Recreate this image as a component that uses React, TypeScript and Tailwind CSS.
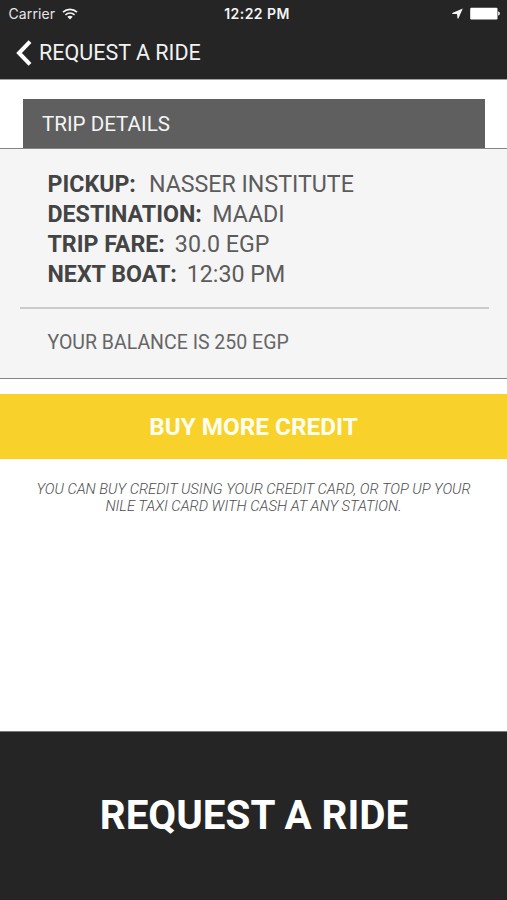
import { clsx } from "clsx"

interface TripDetail {
  label: string
  value: string
  gap: string
}

const tripDetails: TripDetail[] = [
  { label: "PICKUP:", value: "NASSER INSTITUTE", gap: "gap-[13px]" },
  { label: "DESTINATION:", value: "MAADI", gap: "gap-[10.5px]" },
  { label: "TRIP FARE:", value: "30.0 EGP", gap: "gap-[10px]" },
  { label: "NEXT BOAT:", value: "12:30 PM", gap: "gap-[10px]" },
]

function WifiIcon() {
  return (
    <svg className="ml-[7px] h-[12px] w-[16px]" viewBox="0 0 16 12" fill="none" stroke="#f2f2f2">
      <path d="M1 4.2C5 0.3 11 0.3 15 4.2" strokeWidth="1.7" />
      <path d="M3.4 6.8C6 4.4 10 4.4 12.6 6.8" strokeWidth="1.6" />
      <path d="M5.3 8.8C6.9 7.4 9.1 7.4 10.7 8.8L8 11.6Z" fill="#f2f2f2" stroke="none" />
    </svg>
  )
}

function StatusBar() {
  return (
    <div className="grid h-[27px] grid-cols-3 items-center font-[Inter,sans-serif] text-[14px] text-[#e6e6e6]">
      <div className="flex items-center pl-[8.5px]">
        <span className="tracking-[0.1px]">Carrier</span>
        <WifiIcon />
      </div>
      <div className="pl-[7px] text-center text-[14px] font-semibold tracking-[0.45px] text-[#f5f5f5]">12:22 PM</div>
      <div className="flex items-center justify-end pr-[7px]">
        <svg className="h-[11px] w-[11px]" viewBox="0 0 11 11" fill="#f5f5f5">
          <path d="M10.8 0.4L0.2 5L0.4 6L5 6.1L5.5 10.6L6.4 10.6Z" />
        </svg>
        <svg className="ml-[7px] h-[13px] w-[30px]" viewBox="0 0 30 13" fill="#ffffff">
          <rect x="0.2" y="0.8" width="27.3" height="11.6" rx="1.2" />
          <path d="M28.2 4.6C30.4 5.2 30.4 8 28.2 8.6Z" />
        </svg>
      </div>
    </div>
  )
}

function Header() {
  return (
    <header className="h-20 border-b border-[#a0a0a0] bg-[#252525]">
      <StatusBar />
      <div className="flex h-[52px] items-center pl-4">
        <svg className="h-[26px] w-4" viewBox="0 0 16 26" fill="none" stroke="#ffffff" strokeWidth="4">
          <path d="M14 1.6L3 13L14 24.4" />
        </svg>
        <h1 className="ml-[7px] text-[21.5px] leading-none text-[#f2f2f2]">REQUEST A RIDE</h1>
      </div>
    </header>
  )
}

export default function App() {
  return (
    <div className="flex h-[900px] w-[507px] flex-col overflow-hidden bg-white font-[Roboto,sans-serif]">
      <Header />

      <section className="mt-[19px]">
        <h2 className="mr-[22px] ml-[23px] flex h-[49px] items-center bg-[#5f5f5f] pt-px pl-[19px] text-[20.6px] leading-none text-[#f5f5f5]">
          TRIP DETAILS
        </h2>
        <div className="h-[231px] border-y border-[#858585] bg-[#f5f5f5] pt-5 pr-[18px] pl-5">
          <dl className="pl-[27.5px] text-[23.2px] leading-[30px]">
            {tripDetails.map((detail) => (
              <div key={detail.label} className={clsx("flex", detail.gap)}>
                <dt className="font-bold text-[#444444]">{detail.label}</dt>
                <dd className="text-[#5c5c5c]">{detail.value}</dd>
              </div>
            ))}
          </dl>
          <hr className="mt-[18px] border-t-2 border-[#cbcbcb]" />
          <p className="pt-[24px] pl-[27.5px] text-[19.5px] leading-5 text-[#666666]">YOUR BALANCE IS 250 EGP</p>
        </div>
      </section>

      <button className="mt-[15px] h-[65px] w-full bg-[#f8d22a] pt-[2px] text-[24.3px] leading-none font-bold text-[#fffef0]">
        BUY MORE CREDIT
      </button>
      <p className="mt-[22px] text-center text-[14.75px] leading-[17px] font-light text-[#4c4c4c] italic">
        YOU CAN BUY CREDIT USING YOUR CREDIT CARD, OR TOP UP YOUR
        <br />
        NILE TAXI CARD WITH CASH AT ANY STATION.
      </p>

      <button className="mt-auto h-[169px] w-full border-y border-t-[#777777] border-b-[#2a1e23] bg-[#252525] pt-px pl-px text-[40.4px] leading-none font-bold text-white">
        REQUEST A RIDE
      </button>
    </div>
  )
}
